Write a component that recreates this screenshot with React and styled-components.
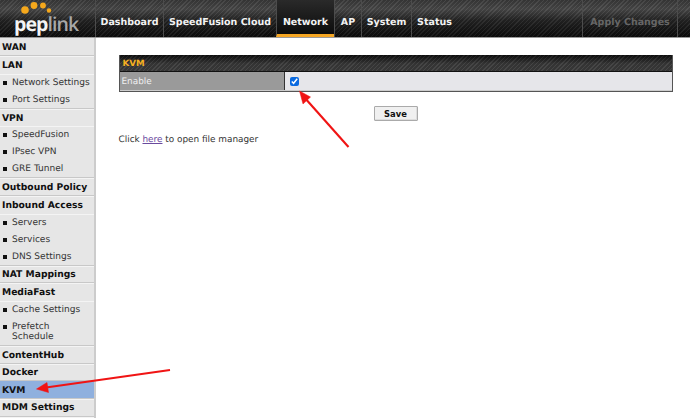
import React from "react";
import styled, { createGlobalStyle } from "styled-components";

const Global = createGlobalStyle`
  html, body { margin: 0; padding: 0; background: #fff; overflow: hidden; }
  body { font-family: "DejaVu Sans", Verdana, sans-serif; text-rendering: geometricPrecision; }
`;
const hatch = `repeating-linear-gradient(135deg, rgba(255,255,255,.06) 0 1px, rgba(0,0,0,.1) 1px 3px)`;

const Page = styled.div`
  position: relative; width: 690px; height: 418px; overflow: hidden;
  display: flex; flex-direction: column;
`;
const Header = styled.header`
  flex: none; height: 37px; display: flex; box-sizing: content-box;
  border-bottom: 1px solid #999;
  background: ${hatch}, linear-gradient(#3a3a3a 0, #4a4a4a 25%, #242424 55%, #0c0c0c 100%);
`;
const Logo = styled.div`
  position: relative; width: 95px; flex: none; box-sizing: border-box;
  padding: 13px 0 0 14px; font: bold 19.5px/22px "Open Sans", "Liberation Sans", sans-serif; letter-spacing: -.9px;
  color: #f4f4f4;
  span { color: #a8a8a8; font-weight: 600; }
  svg { position: absolute; left: 19px; top: 1px; }
`;
const NavItem = styled.div`
  display: flex; align-items: center; height: 37px; box-sizing: border-box;
  padding: 8px 0 0; border-left: 1px solid #4c4c4c; white-space: nowrap;
  font: bold 9.5px "DejaVu Sans", Verdana, sans-serif;
  color: ${p => p.$dim ? "#666" : "#f2f2f2"};
  width: ${p => p.$w}px;
  justify-content: center;
  ${p => p.$active && `border-bottom: 3px solid #f5a623; padding-top: 11px; background: linear-gradient(#2a2a2a,#0c0c0c);`}
`;
const Spacer = styled.div` flex: 1; `;
const Body = styled.div` flex: 1; display: flex; min-height: 0; `;
const Side = styled.nav`
  width: 94px; flex: none; background: #e6e6e6; border-right: 2px solid #ccc; padding-top: .7px;
  font-family: "DejaVu Sans", Verdana, sans-serif; color: #111;
`;
const Head = styled.div`
  display: flex; align-items: center; height: 17.6px; box-sizing: border-box; padding: 1px 0 0 2px;
  font-size: 9.2px; font-weight: bold; white-space: nowrap;
  border-bottom: ${p => p.$open ? "0" : "1px solid #c8c8c8"};
  box-shadow: 0 1px 0 #f4f4f4;
  background: ${p => p.$active ? "#8fb0de" : "transparent"};
`;
const Group = styled.div` border-bottom: 1px solid #c8c8c8; box-shadow: 0 1px 0 #f4f4f4; `;
const Sub = styled.div`
  position: relative; padding: 4px 4px 2.4px 12px; font-size: 9.05px; line-height: 10.6px; color: #333;
  &::before { content: ""; position: absolute; left: 3px; top: 7px; width: 4px; height: 4px; background: #111; }
`;
const Main = styled.main`
  flex: 1; padding: 17px 17.5px 0 22.5px; min-width: 0;
  font-family: "DejaVu Sans", Verdana, sans-serif;
`;
const Card = styled.section`
  border: 1px solid #555; border-top: 0;
  background: #e6e6ea;
`;
const CardTitle = styled.div`
  height: 17px; box-sizing: border-box; padding: 1px 0 0 3px; display: flex; align-items: center;
  color: #f5b021; font-size: 8.7px; font-weight: bold;
  border-bottom: 1px solid #111;
  background: ${hatch}, linear-gradient(#0e0e0e, #3a3a3a 55%, #3c3c3c);
`;
const Row = styled.div` display: flex; height: 18px; border-bottom: 1px solid #ccc; `;
const Label = styled.div`
  width: 165px; flex: none; box-sizing: border-box; padding: 2px 0 0 2px; display: flex; align-items: center;
  background: #9a9a9a; color: #f0f0f0; font-size: 8.9px; border-right: 1px solid #333;
`;
const Value = styled.div` flex: 1; display: flex; align-items: center; padding-left: 5px; `;
const Check = styled.input`
  width: 9px; height: 9px; margin: 0; accent-color: #0a6ae0;
`;
const Actions = styled.div` display: flex; justify-content: center; padding: 14px 0 13px; `;
const Save = styled.button`
  width: 44px; height: 15px; padding: 0; box-sizing: border-box; border: 1px solid #aaa; border-radius: 1px;
  background: #f0f0f0; color: #111; font: bold 8.4px "DejaVu Sans", Verdana, sans-serif;
  box-shadow: inset -1px -1px 0 #ddd;
`;
const Note = styled.p`
  margin: 0; font-size: 8.9px; line-height: 12px; color: #333;
  a { color: #6a4a9e; text-decoration: underline; }
`;
const Arrows = styled.svg` position: absolute; left: 0; top: 0; pointer-events: none; `;

const Dots = () => (
  <svg width="36" height="14" viewBox="0 0 36 14">
    <circle cx="6" cy="9" r="3.8" fill="#f5a81c" />
    <circle cx="15" cy="4.5" r="3.4" fill="#f5a81c" />
    <circle cx="24" cy="4.5" r="2.9" fill="#f5a81c" />
    <circle cx="30" cy="9.5" r="2.2" fill="#f5a81c" />
  </svg>
);

export default function App() {
  return (
    <Page>
      <Global />
      <Header>
        <Logo><Dots />pep<span>link</span></Logo>
        <NavItem $w={68}>Dashboard</NavItem>
        <NavItem $w={113}>SpeedFusion Cloud</NavItem>
        <NavItem $w={58} $active>Network</NavItem>
        <NavItem $w={27}>AP</NavItem>
        <NavItem $w={50}>System</NavItem>
        <NavItem $w={46}>Status</NavItem>
        <Spacer />
        <NavItem $w={95} $dim>Apply Changes</NavItem>
        <NavItem $w={13} />
      </Header>
      <Body>
        <Side>
          <Head>WAN</Head>
          <Group>
            <Head $open>LAN</Head>
            <Sub>Network Settings</Sub>
            <Sub>Port Settings</Sub>
          </Group>
          <Group>
            <Head $open>VPN</Head>
            <Sub>SpeedFusion</Sub>
            <Sub>IPsec VPN</Sub>
            <Sub>GRE Tunnel</Sub>
          </Group>
          <Head>Outbound Policy</Head>
          <Group>
            <Head $open>Inbound Access</Head>
            <Sub>Servers</Sub>
            <Sub>Services</Sub>
            <Sub>DNS Settings</Sub>
          </Group>
          <Head>NAT Mappings</Head>
          <Group>
            <Head $open>MediaFast</Head>
            <Sub>Cache Settings</Sub>
            <Sub>Prefetch Schedule</Sub>
          </Group>
          <Head>ContentHub</Head>
          <Head>Docker</Head>
          <Head $active>KVM</Head>
          <Head>MDM Settings</Head>
        </Side>
        <Main>
          <Card>
            <CardTitle>KVM</CardTitle>
            <Row>
              <Label>Enable</Label>
              <Value><Check type="checkbox" defaultChecked /></Value>
            </Row>
          </Card>
          <Actions><Save>Save</Save></Actions>
          <Note>Click <a href="#here">here</a> to open file manager</Note>
        </Main>
      </Body>
      <Arrows width="690" height="418" viewBox="0 0 690 418">
        <g fill="#f01414" stroke="#f01414">
          <line x1="348.5" y1="147" x2="304" y2="97" strokeWidth="2.1" />
          <polygon points="299.5,91 310.5,97 303,104" strokeWidth="0.5" />
          <line x1="170" y1="370" x2="46" y2="387.5" strokeWidth="2.1" />
          <polygon points="36.5,389 47,382.5 48.5,392.5" strokeWidth="0.5" />
        </g>
      </Arrows>
    </Page>
  );
}
